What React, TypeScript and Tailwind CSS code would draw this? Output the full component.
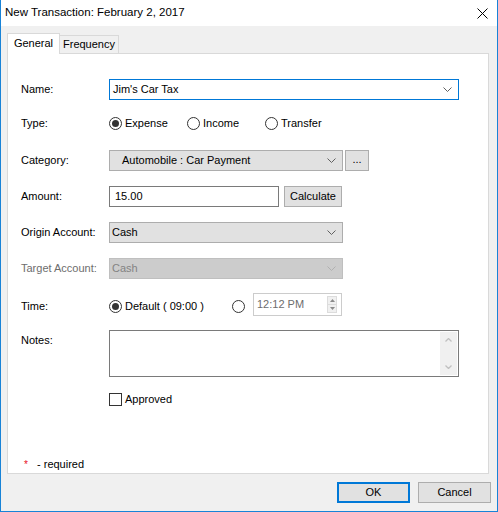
import React from "react";

const font = { fontFamily: '"Liberation Sans", Arial, sans-serif' };

function Chevron({ color = "#606060" }: { color?: string }) {
  return (
    <svg width="9" height="5" viewBox="0 0 9 5" className="block">
      <polyline points="0.5,0.5 4.5,4.5 8.5,0.5" fill="none" stroke={color} strokeWidth="1" />
    </svg>
  );
}

function Radio({ checked }: { checked?: boolean }) {
  return (
    <span className="w-[13px] h-[13px] rounded-full border border-[#333333] bg-white flex items-center justify-center shrink-0">
      {checked && <span className="w-[7px] h-[7px] rounded-full bg-[#333333]" />}
    </span>
  );
}

function Label({ children, disabled }: { children: React.ReactNode; disabled?: boolean }) {
  return (
    <div className={"w-[88px] shrink-0 " + (disabled ? "text-[#6d6d6d]" : "text-black")}>{children}</div>
  );
}

export default function App() {
  return (
    <div
      className="w-[498px] h-[512px] bg-[#f0f0f0] border-l border-r border-b border-[#1883d7] flex flex-col text-[11px] text-black select-none"
      style={font}
    >
      {/* Title bar */}
      <div className="h-[26px] bg-white flex items-center pl-[4px] pr-[9px] shrink-0">
        <div className="flex-1 text-[11.5px] leading-none">New Transaction: February 2, 2017</div>
        <svg width="11" height="11" viewBox="0 0 11 11" className="block">
          <path d="M0.5 0.5 L10.5 10.5 M10.5 0.5 L0.5 10.5" stroke="#000" strokeWidth="1" />
        </svg>
      </div>

      {/* Tabs */}
      <div className="mt-[7px] pl-[6px] pr-[8px] flex flex-col">
        <div className="h-[20px] flex items-end">
          <div className="h-[21px] -mb-px relative z-10 bg-white border-l border-t border-r border-[#d9d9d9] w-[53px] flex items-center justify-center pb-[2px]">
            General
          </div>
          <div className="h-[18px] bg-[#f0f0f0] border-t border-r border-[#d9d9d9] w-[59px] flex items-center justify-center">
            Frequency
          </div>
        </div>

        {/* Panel */}
        <div className="h-[421px] bg-white border border-[#d9d9d9] pl-[13px] flex flex-col">
          {/* Name */}
          <div className="mt-[25px] h-[21px] flex items-center">
            <Label>Name:</Label>
            <div className="w-[350px] h-[21px] border border-[#0078d7] bg-white flex items-center pl-[3px] pr-[6px]">
              <span className="flex-1">Jim's Car Tax</span>
              <Chevron />
            </div>
          </div>

          {/* Type */}
          <div className="mt-[13px] h-[21px] flex items-center">
            <Label>Type:</Label>
            <div className="w-[78px] flex items-center gap-[3px]">
              <Radio checked />
              <span>Expense</span>
            </div>
            <div className="w-[78px] flex items-center gap-[3px]">
              <Radio />
              <span>Income</span>
            </div>
            <div className="w-[78px] flex items-center gap-[3px]">
              <Radio />
              <span>Transfer</span>
            </div>
          </div>

          {/* Category */}
          <div className="mt-[16px] h-[21px] flex items-center">
            <Label>Category:</Label>
            <div className="w-[234px] h-[21px] border border-[#adadad] bg-[#e1e1e1] flex items-center pl-[12px] pr-[6px]">
              <span className="flex-1">Automobile : Car Payment</span>
              <Chevron />
            </div>
            <div className="ml-[2px] w-[24px] h-[21px] border border-[#adadad] bg-[#e1e1e1] flex items-center justify-center leading-none pb-[3px]">
              ...
            </div>
          </div>

          {/* Amount */}
          <div className="mt-[15px] h-[21px] flex items-center">
            <Label>Amount:</Label>
            <div className="w-[170px] h-[21px] border border-[#7a7a7a] bg-white flex items-center pl-[5px]">15.00</div>
            <div className="ml-[5px] w-[58px] h-[21px] border border-[#adadad] bg-[#e1e1e1] flex items-center justify-center">
              Calculate
            </div>
          </div>

          {/* Origin */}
          <div className="mt-[15px] h-[21px] flex items-center">
            <Label>Origin Account:</Label>
            <div className="w-[234px] h-[21px] border border-[#adadad] bg-[#e1e1e1] flex items-center pl-[2px] pr-[6px]">
              <span className="flex-1">Cash</span>
              <Chevron />
            </div>
          </div>

          {/* Target */}
          <div className="mt-[15px] h-[21px] flex items-center">
            <Label disabled>Target Account:</Label>
            <div className="w-[234px] h-[21px] border border-[#bfbfbf] bg-[#cccccc] flex items-center pl-[2px] pr-[6px] text-[#838383]">
              <span className="flex-1">Cash</span>
              <Chevron color="#b0b0b0" />
            </div>
          </div>

          {/* Time */}
          <div className="mt-[14px] h-[23px] flex items-center">
            <Label>
              <div className="pt-[4px]">Time:</div>
            </Label>
            <div className="w-[123px] flex items-center gap-[3px] pt-[4px]">
              <Radio checked />
              <span>Default ( 09:00 )</span>
            </div>
            <div className="pt-[4px]">
              <Radio />
            </div>
            <div className="ml-[8px] w-[89px] h-[23px] border border-[#cccccc] bg-white flex items-center pl-[3px] pr-[4px] text-[#6d6d6d]">
              <span className="flex-1">12:12 PM</span>
              <div className="w-[10px] h-[17px] flex flex-col border border-[#dcdcdc]">
                <div className="flex-1 flex items-center justify-center bg-[#f0f0f0] border-b border-[#dcdcdc]">
                  <svg width="5" height="3" viewBox="0 0 5 3" className="block">
                    <polygon points="0,3 2.5,0 5,3" fill="#8a8a8a" />
                  </svg>
                </div>
                <div className="flex-1 flex items-center justify-center bg-[#f0f0f0]">
                  <svg width="5" height="3" viewBox="0 0 5 3" className="block">
                    <polygon points="0,0 2.5,3 5,0" fill="#8a8a8a" />
                  </svg>
                </div>
              </div>
            </div>
          </div>

          {/* Notes */}
          <div className="mt-[14px] h-[47px] flex items-start">
            <Label>
              <div className="pt-[2px]">Notes:</div>
            </Label>
            <div className="w-[350px] h-[47px] border border-[#7a7a7a] bg-white flex justify-end p-[1px]">
              <div className="w-[17px] h-full bg-[#f0f0f0] flex flex-col items-center justify-between py-[6px]">
                <svg width="7" height="4" viewBox="0 0 7 4" className="block">
                  <polyline points="0.5,3.5 3.5,0.5 6.5,3.5" fill="none" stroke="#c0c0c0" strokeWidth="1.3" />
                </svg>
                <svg width="7" height="4" viewBox="0 0 7 4" className="block">
                  <polyline points="0.5,0.5 3.5,3.5 6.5,0.5" fill="none" stroke="#c0c0c0" strokeWidth="1.3" />
                </svg>
              </div>
            </div>
          </div>

          {/* Approved */}
          <div className="mt-[16px] h-[13px] flex items-center">
            <div className="w-[88px] shrink-0" />
            <span className="w-[13px] h-[13px] border border-[#333333] bg-white shrink-0" />
            <span className="ml-[3px]">Approved</span>
          </div>

          {/* Required */}
          <div className="mt-[51px] h-[14px] flex items-center pl-[3px]">
            <span className="text-[#e81123] w-[13px] text-[10px]">*</span>
            <span>- required</span>
          </div>
        </div>
      </div>

      {/* Buttons */}
      <div className="mt-[8px] flex justify-end pr-[6px] gap-[8px]">
        <div className="w-[73px] h-[21px] border-2 border-[#0078d7] bg-[#e1e1e1] flex items-center justify-center">OK</div>
        <div className="w-[73px] h-[21px] border border-[#adadad] bg-[#e1e1e1] flex items-center justify-center">Cancel</div>
      </div>
    </div>
  );
}
